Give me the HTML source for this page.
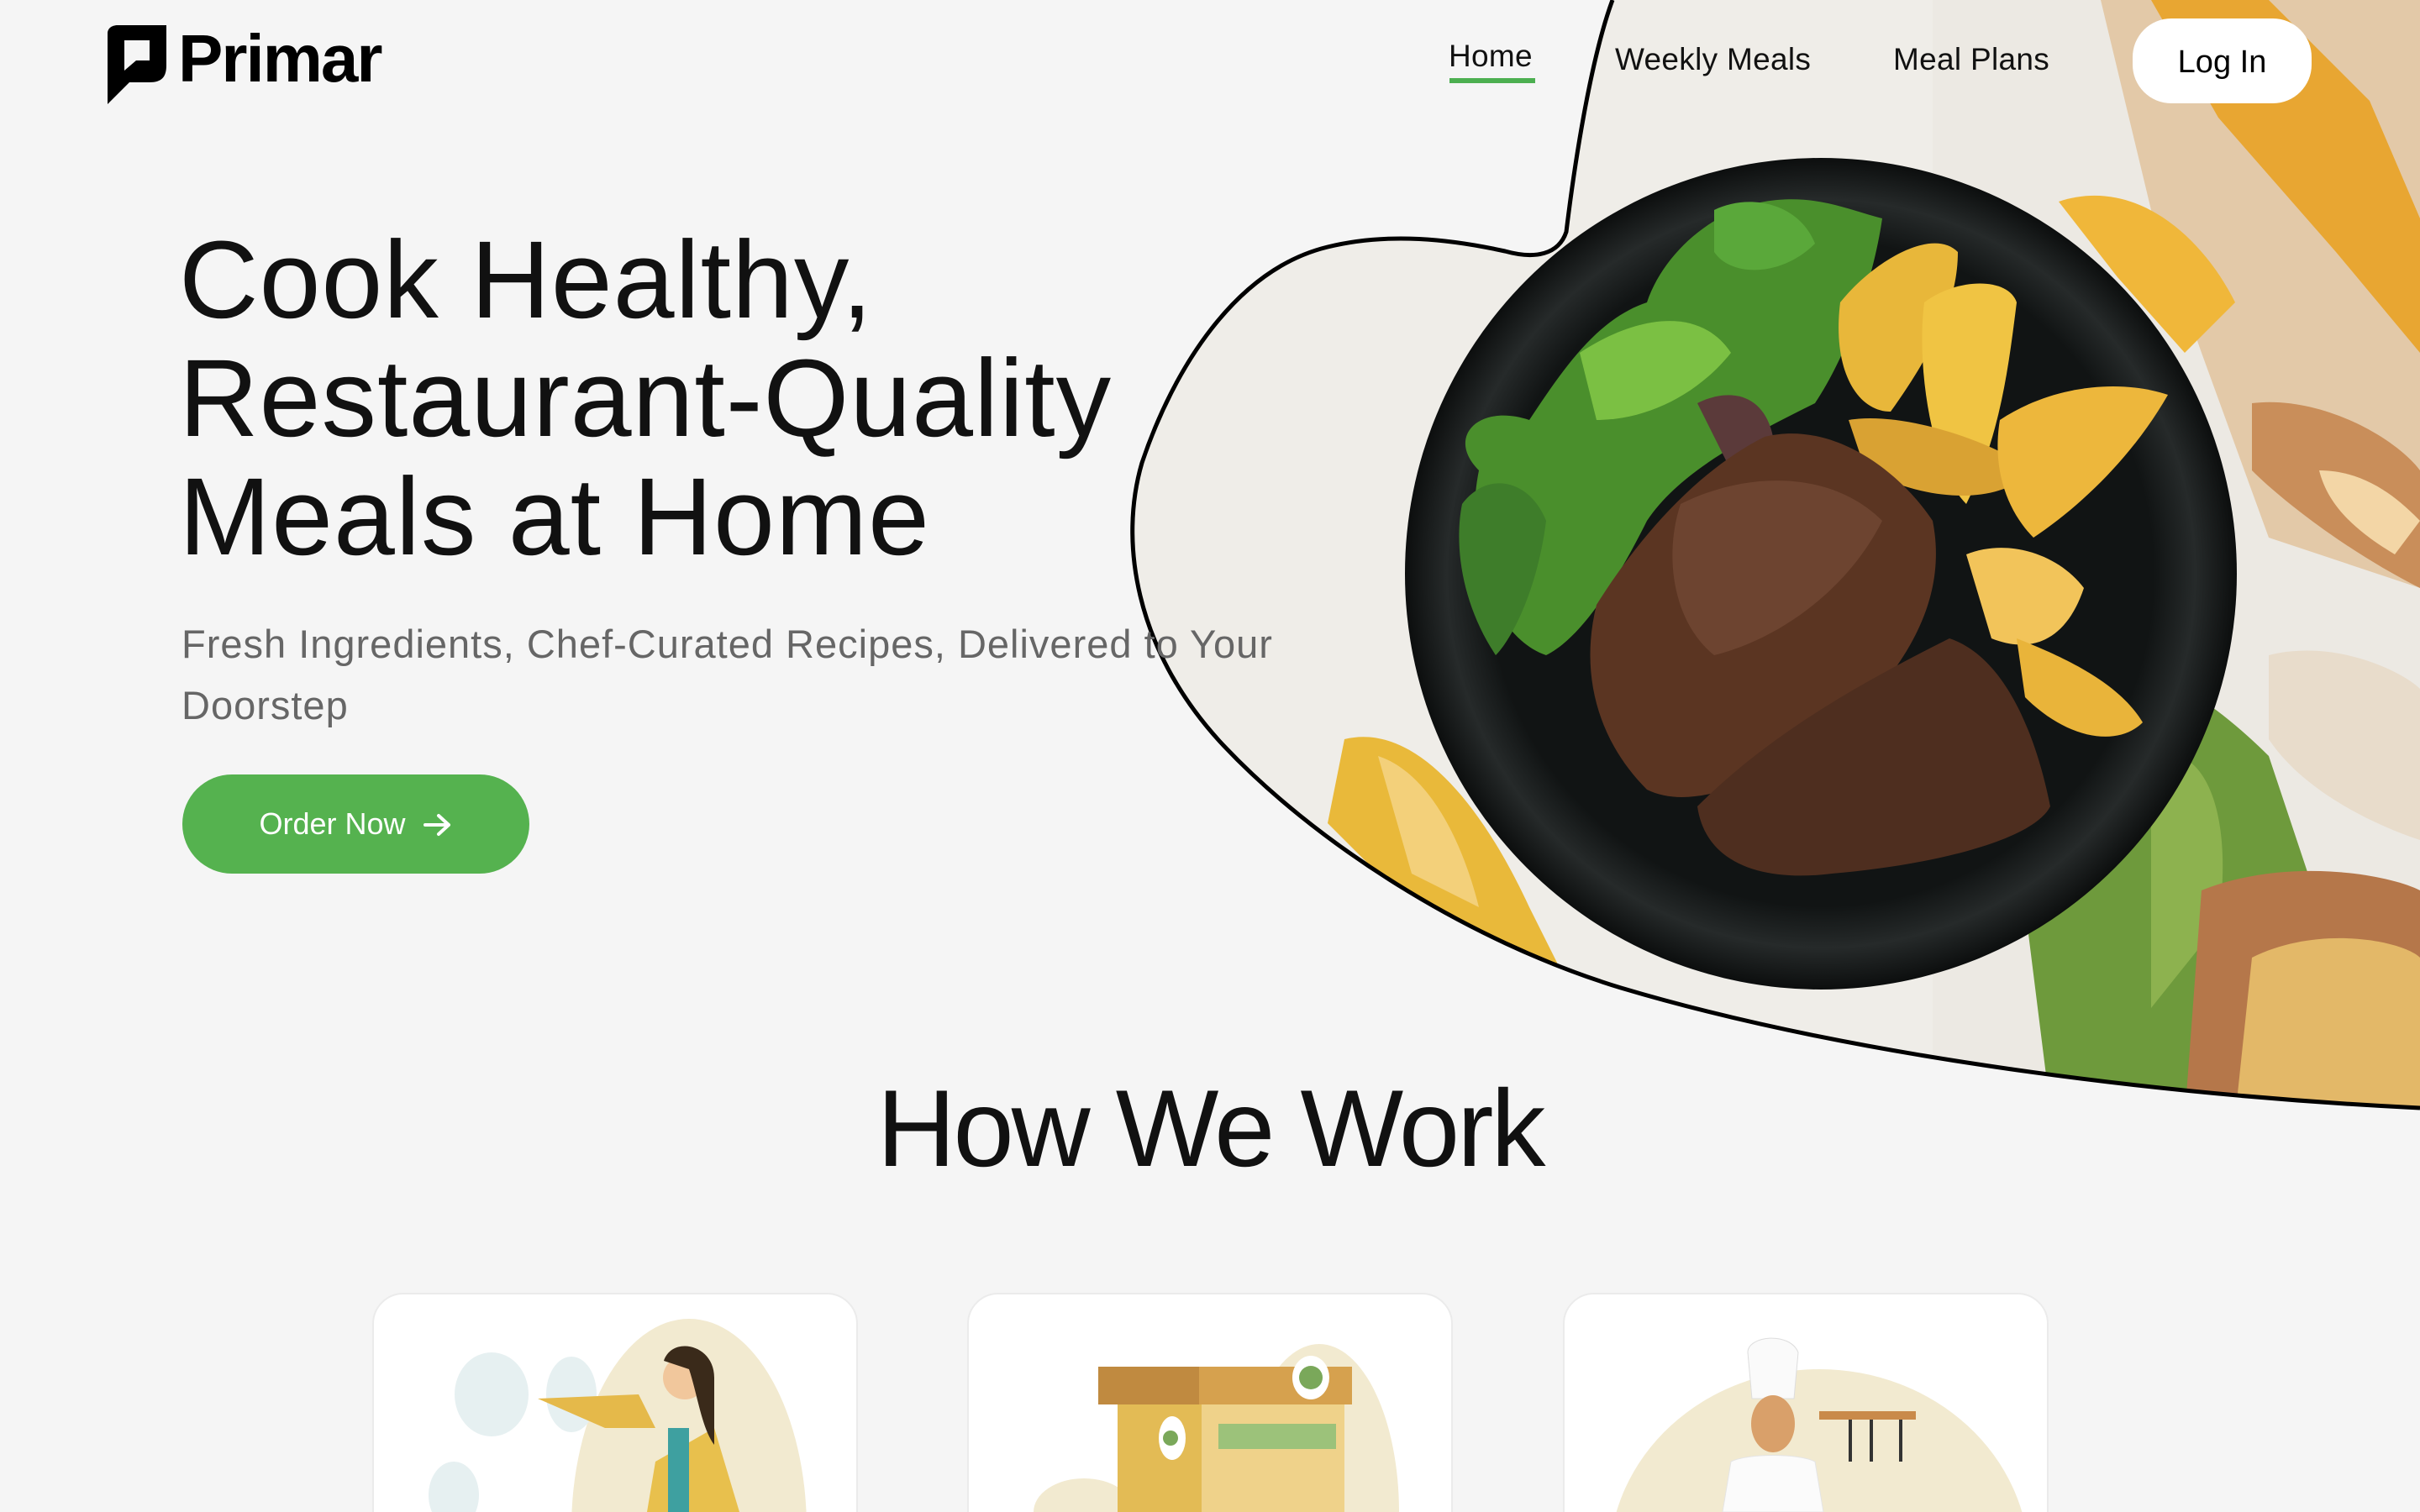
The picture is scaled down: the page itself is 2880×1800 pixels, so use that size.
<!DOCTYPE html>
<html><head><meta charset="utf-8">
<style>
html,body{margin:0;padding:0}
body{width:2880px;height:1800px;overflow:hidden;background:#f5f5f5;font-family:"Liberation Sans",sans-serif;position:relative;color:#111}
.abs{position:absolute}
.nav{font-size:37px;color:#111;top:50px;letter-spacing:0.3px}
</style></head><body>
<svg class="abs" style="left:0;top:0" width="2880" height="1800" viewBox="0 0 2880 1800">
<defs>
<clipPath id="blob"><path d="M1919,0 C1892,73 1873,202 1864,276 C1855,303 1827,309 1791,299 C1727,285 1653,276 1580,294 C1469,321 1396,441 1359,551 C1332,643 1350,771 1451,882 C1561,1001 1745,1120 1929,1176 C2204,1258 2571,1304 2880,1319 L2880,0 Z"/></clipPath>
<radialGradient id="plate" cx="50%" cy="50%" r="50%"><stop offset="0.8" stop-color="#111414"/><stop offset="0.9" stop-color="#262a2a"/><stop offset="1" stop-color="#0c0e0e"/></radialGradient>
</defs>
<g clip-path="url(#blob)">
<rect x="1300" y="0" width="1580" height="1330" fill="#ece9e3"/>
<rect x="1300" y="0" width="1000" height="1330" fill="#efede8"/>
<path d="M2500,0 L2880,0 L2880,700 L2700,640 L2620,420 L2560,250 Z" fill="#e3c9a8"/>
<path d="M2560,0 L2700,0 L2820,120 L2880,260 L2880,420 L2780,300 L2640,140 Z" fill="#e8a632"/>
<path d="M2450,240 C2540,210 2620,280 2660,360 L2600,420 L2520,330 Z" fill="#f0b73a"/>
<path d="M2680,480 C2760,470 2850,520 2880,560 L2880,700 C2800,660 2720,600 2680,560 Z" fill="#c98e5a"/>
<path d="M2760,560 C2820,560 2860,600 2880,620 L2850,660 C2800,630 2770,600 2760,560 Z" fill="#f3d6a6"/>
<path d="M2420,780 C2520,760 2620,820 2700,900 L2760,1080 L2700,1320 L2440,1320 L2400,1000 Z" fill="#6e9a3c"/>
<path d="M2560,900 C2620,880 2660,960 2640,1100 L2560,1200 Z" fill="#8db24f"/>
<path d="M2620,1060 C2720,1020 2840,1040 2880,1060 L2880,1330 L2600,1330 Z" fill="#b5774a"/>
<path d="M2680,1140 C2760,1100 2860,1120 2880,1140 L2880,1330 L2660,1330 Z" fill="#e3b868"/>
<path d="M2700,780 C2780,760 2860,800 2880,820 L2880,1000 C2820,980 2740,940 2700,880 Z" fill="#e8dccb"/>
<path d="M1600,880 C1680,860 1760,950 1820,1080 L1860,1160 L1700,1100 L1580,980 Z" fill="#e9b93a"/>
<path d="M1640,900 C1700,920 1740,1000 1760,1080 L1680,1040 Z" fill="#f3d07a"/>
<circle cx="2167" cy="683" r="495" fill="url(#plate)"/>
<path d="M1760,560 C1720,520 1760,480 1820,500 C1860,440 1900,380 1960,360 C1980,300 2040,250 2100,240 C2160,230 2200,250 2240,260 C2230,330 2200,420 2160,480 C2080,520 2000,560 1960,620 C1920,700 1880,760 1840,780 C1780,760 1740,660 1760,560 Z" fill="#4a8f2c"/>
<path d="M1880,420 C1940,380 2020,360 2060,420 C2020,470 1960,500 1900,500 Z" fill="#7bc043"/>
<path d="M2040,250 C2080,230 2140,240 2160,290 C2120,330 2060,330 2040,300 Z" fill="#5aa83a"/>
<path d="M1740,600 C1770,560 1820,570 1840,620 C1830,700 1800,760 1780,780 C1740,720 1730,650 1740,600 Z" fill="#3e7d2a"/>
<path d="M2020,480 C2060,460 2100,470 2110,520 L2060,560 Z" fill="#5b3a3a"/>
<path d="M2190,360 C2230,310 2300,270 2330,300 C2330,360 2300,420 2250,490 C2210,490 2180,440 2190,360 Z" fill="#e8b73a"/>
<path d="M2290,360 C2330,330 2390,330 2400,360 C2390,440 2380,520 2340,600 C2300,560 2280,440 2290,360 Z" fill="#f0c443"/>
<path d="M2200,500 C2260,490 2360,520 2420,560 C2380,600 2300,600 2220,560 Z" fill="#d9a233"/>
<path d="M2380,500 C2440,460 2520,450 2580,470 C2540,540 2480,600 2420,640 C2390,610 2370,560 2380,500 Z" fill="#edb73c"/>
<path d="M2340,660 C2390,640 2450,660 2480,700 C2460,760 2420,780 2370,760 Z" fill="#f2c45a"/>
<path d="M2400,760 C2450,780 2520,810 2550,860 C2520,890 2460,880 2410,830 Z" fill="#e9b43a"/>
<path d="M1900,720 C1950,640 2020,560 2100,520 C2180,500 2260,560 2300,620 C2320,720 2260,800 2200,860 C2120,920 2020,970 1960,940 C1900,880 1880,800 1900,720 Z" fill="#5b3522"/>
<path d="M2000,600 C2080,560 2180,560 2240,620 C2200,700 2120,760 2040,780 C1990,740 1980,660 2000,600 Z" fill="#6d4430"/>
<path d="M2020,960 C2100,880 2200,820 2320,760 C2380,780 2420,860 2440,960 C2420,1000 2300,1030 2180,1040 C2100,1050 2030,1030 2020,960 Z" fill="#4e2e1f"/>
</g>
<path d="M1919,0 C1892,73 1873,202 1864,276 C1855,303 1827,309 1791,299 C1727,285 1653,276 1580,294 C1469,321 1396,441 1359,551 C1332,643 1350,771 1451,882 C1561,1001 1745,1120 1929,1176 C2204,1258 2571,1304 2880,1319" fill="none" stroke="#000" stroke-width="5"/>
<path d="M128,40 C128,33 134,30 140,30 L198,30 L198,78 C198,92 192,98 178,98 L154,98 L128,124 Z M148,48 L148,84 L162,72 L178,72 L178,48 Z" fill="#000" fill-rule="evenodd"/>
</svg>

<div class="abs" style="left:212px;top:24px;font-size:80px;font-weight:bold;letter-spacing:-2px;color:#000">Primar</div>

<div class="abs nav" style="left:1724px;top:46px">Home</div>
<div class="abs" style="left:1725px;top:93px;width:102px;height:6px;background:#4caf50"></div>
<div class="abs nav" style="left:1922px">Weekly Meals</div>
<div class="abs nav" style="left:2253px">Meal Plans</div>
<div class="abs" style="left:2538px;top:22px;width:213px;height:101px;background:#fff;border-radius:46px;font-size:38px;line-height:104px;text-align:center;color:#000">Log In</div>

<div class="abs" style="left:213px;top:262px;font-size:131px;line-height:141px;letter-spacing:1px;color:#111;white-space:nowrap">Cook Healthy,<br>Restaurant-Quality<br>Meals at Home</div>
<div class="abs" style="left:216px;top:730px;font-size:47px;line-height:73px;color:#666;letter-spacing:1px;width:1600px">Fresh Ingredients, Chef-Curated Recipes, Delivered to Your<br>Doorstep</div>
<div class="abs" style="left:217px;top:922px;width:413px;height:118px;background:#55b24f;border-radius:59px;color:#fff;font-size:36px;line-height:118px;text-align:center">Order Now &nbsp;<svg width="36" height="30" viewBox="0 0 36 30" style="vertical-align:-4px"><path d="M3,15 H31 M19,4 L31,15 L19,26" fill="none" stroke="#fff" stroke-width="4" stroke-linecap="round" stroke-linejoin="round"/></svg></div>

<div class="abs" style="left:0;width:2880px;top:1268px;text-align:center;font-size:130px;letter-spacing:-3px;color:#111">How We Work</div>

<svg class="abs" style="left:0;top:1500px" width="2880" height="300" viewBox="0 1500 2880 300">
<g fill="#fff" stroke="#ebebeb" stroke-width="2">
<rect x="444" y="1540" width="576" height="300" rx="36"/>
<rect x="1152" y="1540" width="576" height="300" rx="36"/>
<rect x="1861" y="1540" width="576" height="300" rx="36"/>
</g>
<ellipse cx="820" cy="1820" rx="140" ry="250" fill="#f2ead0"/>
<ellipse cx="680" cy="1660" rx="30" ry="45" fill="#e6f0f1"/>
<ellipse cx="585" cy="1660" rx="44" ry="50" fill="#e6f0f1"/>
<ellipse cx="540" cy="1780" rx="30" ry="40" fill="#e6f0f1"/>
<path d="M640,1665 L760,1660 L780,1700 L720,1700 Z" fill="#e5b94a"/>
<path d="M780,1740 L850,1700 L880,1800 L770,1800 Z" fill="#e8c04d"/>
<circle cx="815" cy="1640" r="26" fill="#f1c79c"/>
<path d="M790,1620 C800,1590 850,1600 850,1640 L850,1720 C835,1700 830,1660 820,1630 Z" fill="#3a2a1a"/>
<rect x="795" y="1700" width="25" height="100" fill="#3ea0a0"/>
<ellipse cx="1570" cy="1800" rx="95" ry="200" fill="#f2ead0"/>
<ellipse cx="1290" cy="1800" rx="60" ry="40" fill="#f2ead0"/>
<rect x="1307" y="1627" width="302" height="45" fill="#d6a14e"/>
<rect x="1307" y="1627" width="120" height="45" fill="#c08a40"/>
<rect x="1330" y="1672" width="100" height="128" fill="#e3bb55"/>
<rect x="1430" y="1672" width="170" height="128" fill="#efd28a"/>
<rect x="1450" y="1695" width="140" height="30" fill="#9cc27a"/>
<ellipse cx="1560" cy="1640" rx="22" ry="26" fill="#fff"/><circle cx="1560" cy="1640" r="14" fill="#7aa85a"/>
<ellipse cx="1395" cy="1712" rx="16" ry="26" fill="#fff"/><circle cx="1393" cy="1712" r="9" fill="#7aa85a"/>
<ellipse cx="2165" cy="1860" rx="250" ry="230" fill="#f2ead0"/>
<path d="M2080,1610 C2080,1590 2130,1585 2140,1610 L2135,1665 L2085,1665 Z" fill="#fafafa" stroke="#ddd"/>
<ellipse cx="2110" cy="1695" rx="26" ry="34" fill="#d9a06a"/>
<path d="M2060,1740 C2080,1730 2140,1730 2160,1740 L2170,1800 L2050,1800 Z" fill="#fbfbfb" stroke="#e5e5e5"/>
<rect x="2165" y="1680" width="115" height="10" fill="#c98a4a"/>
<rect x="2200" y="1690" width="4" height="50" fill="#333"/><rect x="2225" y="1690" width="4" height="50" fill="#333"/><rect x="2260" y="1690" width="4" height="50" fill="#333"/>
</svg>
</body></html>
